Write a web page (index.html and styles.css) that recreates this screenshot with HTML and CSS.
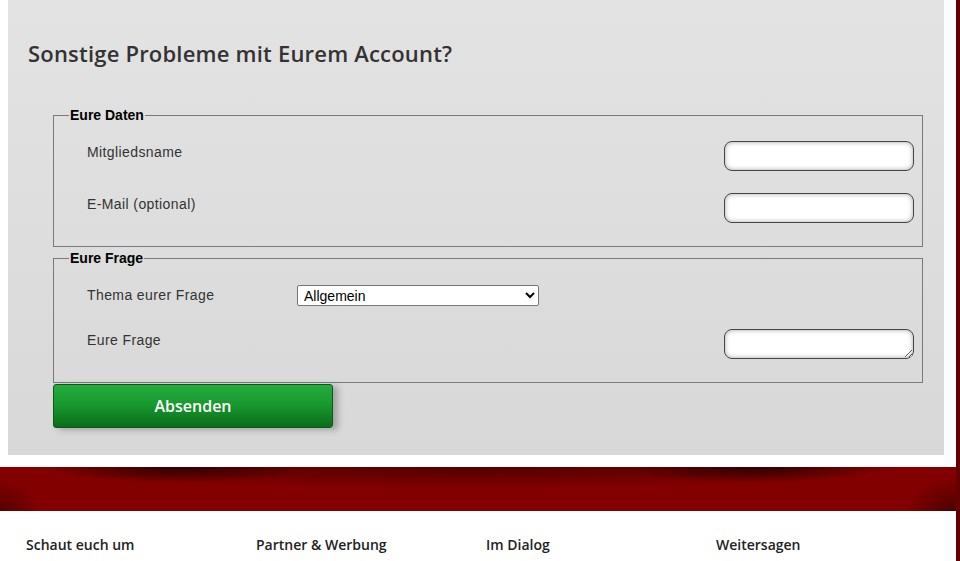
FILE: index.html
```html
<!DOCTYPE html>
<html lang="de">
<head>
<meta charset="utf-8">
<title>Sonstige Probleme</title>
<link rel="stylesheet" href="styles.css">
</head>
<body>
<div class="page">
  <main class="panel">
    <h1 class="title">Sonstige Probleme mit Eurem Account?</h1>
    <form class="form">
      <fieldset class="group group-daten">
        <legend class="legend">Eure Daten</legend>
        <div class="row">
          <label class="label">Mitgliedsname</label>
          <input class="field" type="text">
        </div>
        <div class="row">
          <label class="label">E-Mail (optional)</label>
          <input class="field" type="text">
        </div>
      </fieldset>
      <fieldset class="group group-frage">
        <legend class="legend">Eure Frage</legend>
        <div class="row row-select">
          <label class="label label-wide">Thema eurer Frage</label>
          <select class="select">
            <option>Allgemein</option>
          </select>
        </div>
        <div class="row row-area">
          <label class="label">Eure Frage</label>
          <textarea class="field area"></textarea>
        </div>
      </fieldset>
      <button type="button" class="submit">Absenden</button>
    </form>
  </main>
  <div class="band"></div>
  <footer class="footer">
    <div class="col">Schaut euch um</div>
    <div class="col">Partner &amp; Werbung</div>
    <div class="col">Im Dialog</div>
    <div class="col">Weitersagen</div>
  </footer>
</div>
</body>
</html>
```

FILE: styles.css
```css
html, body {
  margin: 0;
  padding: 0;
  background: #ffffff;
}

body {
  width: 960px;
  height: 561px;
  overflow: hidden;
}

.page {
  width: 956px;
  min-height: 561px;
  border-right: 4px solid #650000;
}

.panel {
  margin-left: 8px;
  width: 936px;
  height: 455px;
  box-sizing: border-box;
  padding-top: 38px;
  background: linear-gradient(to bottom, #e3e3e3 0%, #d8d8d8 100%);
}

.title {
  margin: 0 0 40px 20px;
  font-family: "Open Sans", Lato, sans-serif;
  font-weight: 600;
  font-size: 22px;
  line-height: 30px;
  letter-spacing: 0.2px;
  color: #333333;
}

.form {
  margin: 0 21px 0 45px;
}

.group {
  margin: 0;
  border: 1px solid #7a7a7a;
  padding: 18px 8px 23px 33px;
}

.group-frage {
  margin-top: 4px;
  padding-top: 19px;
  padding-bottom: 23px;
}

.legend {
  padding: 0 1px;
  margin-left: -18px;
  font-family: "Liberation Sans", Arial, sans-serif;
  font-weight: 700;
  font-size: 14px;
  line-height: 15px;
  color: #000000;
}

.row {
  display: flex;
  align-items: flex-start;
  justify-content: space-between;
}

.row + .row {
  margin-top: 22px;
}

.row-select {
  justify-content: flex-start;
}

.row-select + .row-area {
  margin-top: 23px;
}

.label {
  margin-top: 3px;
  font-family: "Liberation Sans", Arial, sans-serif;
  font-size: 14px;
  line-height: 16px;
  letter-spacing: 0.4px;
  color: #333333;
}

.label-wide {
  width: 210px;
  margin-top: 2px;
}

.field {
  width: 190px;
  height: 30px;
  box-sizing: border-box;
  border: 1px solid #444444;
  border-radius: 8px;
  background: #ffffff;
  box-shadow: inset 0 0 5px rgba(0, 0, 0, 0.35);
  font-family: "Liberation Sans", Arial, sans-serif;
  font-size: 13px;
  padding: 4px 8px;
  outline: none;
}

.area {
  display: block;
  resize: both;
}

.select {
  width: 242px;
  height: 21px;
  box-sizing: border-box;
  border: 1px solid #767676;
  border-radius: 2px;
  background: #ffffff;
  font-family: "Liberation Sans", Arial, sans-serif;
  font-size: 14px;
  color: #000000;
  padding: 0 0 0 2px;
}

.submit {
  display: block;
  width: 280px;
  height: 44px;
  margin: 1px 0 0 0;
  border: 1px solid #0b5a17;
  border-radius: 3px;
  background: linear-gradient(to bottom, #25ac3c 0%, #199a30 45%, #0a6c19 100%);
  box-shadow: 5px 2px 6px rgba(0, 0, 0, 0.25);
  color: #ffffff;
  font-family: "Open Sans", Lato, sans-serif;
  font-weight: 600;
  font-size: 16px;
  cursor: pointer;
}

.band {
  height: 44px;
  margin-top: 12px;
  background:
    radial-gradient(ellipse 130px 16px at 178px 0px, rgba(25, 0, 0, 0.75), rgba(25, 0, 0, 0) 100%),
    radial-gradient(ellipse 130px 16px at 753px 0px, rgba(25, 0, 0, 0.75), rgba(25, 0, 0, 0) 100%),
    radial-gradient(ellipse 430px 22px at 470px 0px, rgba(25, 0, 0, 0.45), rgba(25, 0, 0, 0) 100%),
    radial-gradient(ellipse 40px 30px at 0px 44px, rgba(40, 0, 0, 0.5), rgba(40, 0, 0, 0) 100%),
    radial-gradient(ellipse 50px 34px at 956px 44px, rgba(40, 0, 0, 0.6), rgba(40, 0, 0, 0) 100%),
    #820000;
}

.footer {
  display: grid;
  grid-template-columns: repeat(4, 230px);
  padding: 26px 0 0 26px;
}

.col {
  font-family: "Open Sans", Lato, sans-serif;
  font-weight: 600;
  font-size: 14px;
  line-height: 16px;
  color: #222222;
}
```
